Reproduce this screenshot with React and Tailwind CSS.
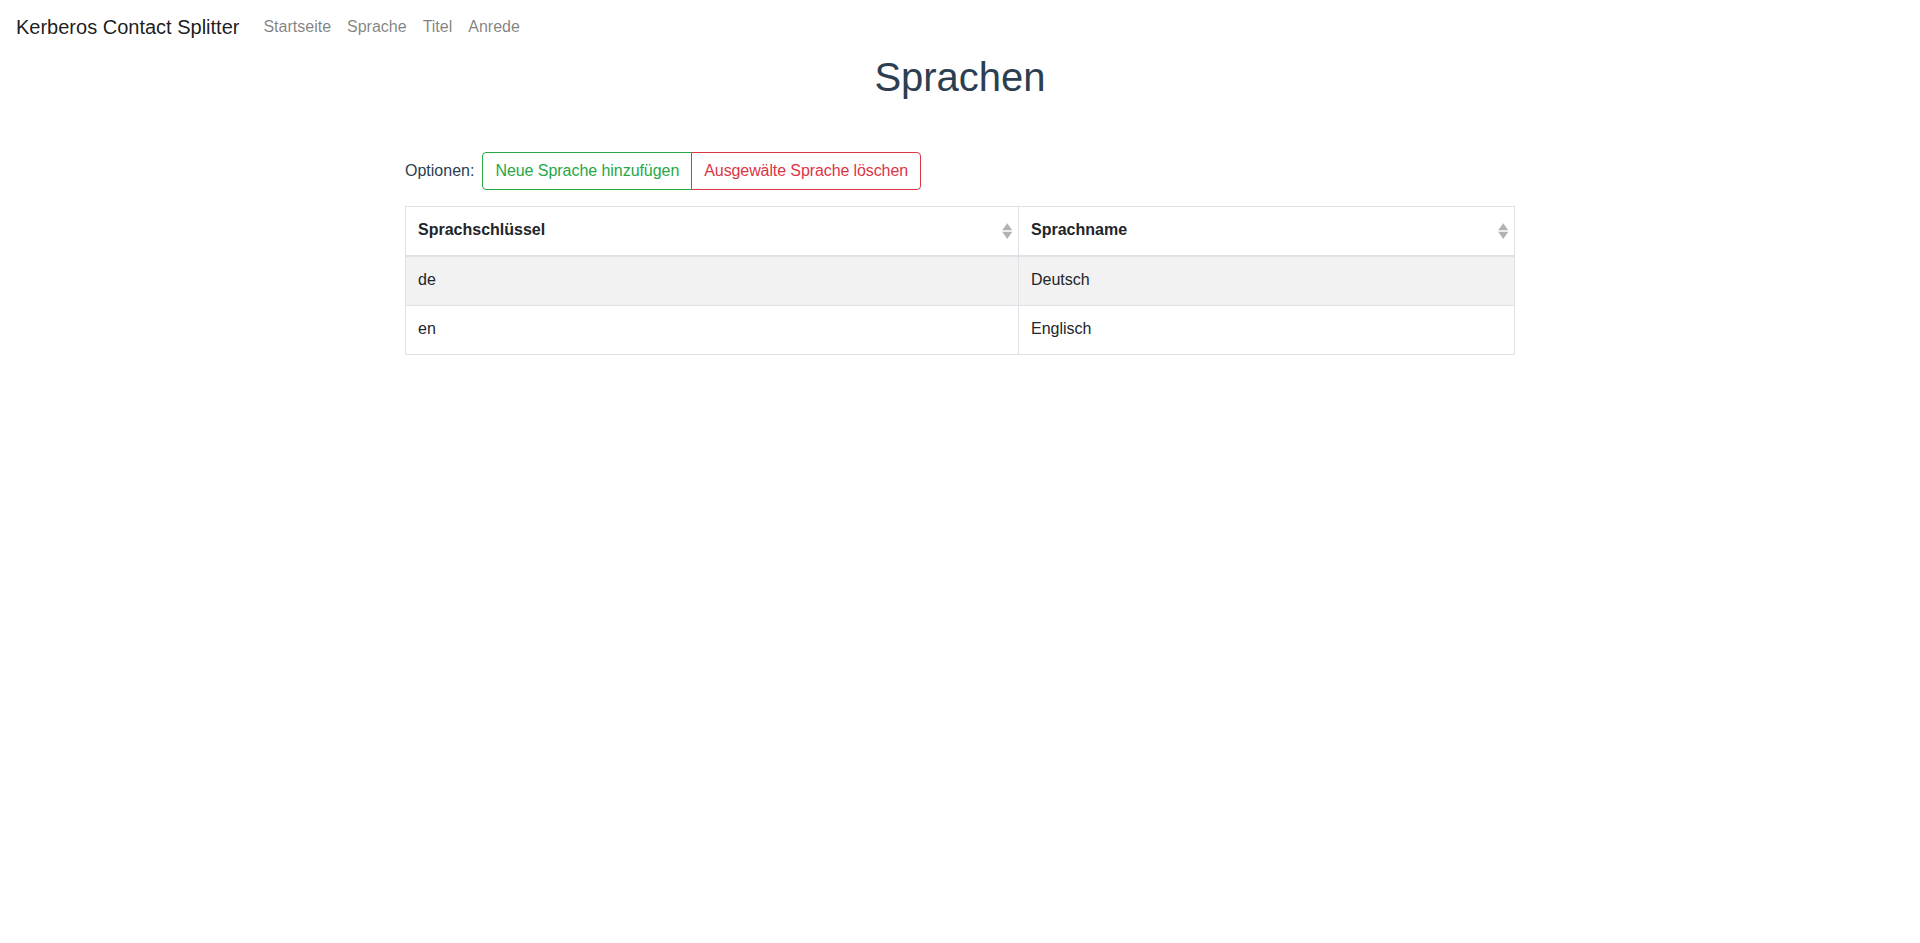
import React from 'react';

const languages = [
    { key: 'de', name: 'Deutsch' },
    { key: 'en', name: 'Englisch' },
];

// bootstrap-vue style "unsorted" indicator
const SortIcon = () => (
    <svg
        className="absolute right-[6px] top-1/2 -translate-y-1/2"
        width="10.4"
        height="16"
        viewBox="0 0 101 101"
        preserveAspectRatio="none"
    >
        <path fill="black" opacity=".3" d="M51 1l25 23 24 22H1l25-22zM51 101l25-23 24-22H1l25 22z" />
    </svg>
);

const Navbar = () => (
    <nav className="flex items-center h-[56px] px-4 pb-[2px]">
        <a className="text-[20px] leading-[30px] text-black/90 mr-4 py-[5px]">Kerberos Contact Splitter</a>
        <ul className="flex">
            {['Startseite', 'Sprache', 'Titel', 'Anrede'].map((item) => (
                <li key={item}>
                    <a className="block px-2 py-2 leading-6 text-black/50">{item}</a>
                </li>
            ))}
        </ul>
    </nav>
);

export default function App() {
    return (
        <div className="min-h-screen bg-white text-[16px] text-[#212529]" style={{ fontFamily: '"Liberation Sans", Arial, sans-serif' }}>
            <Navbar />

            <h1 className="text-center text-[40px] leading-[48px] text-[#2c3e50] -mt-[3px]">Sprachen</h1>

            <div className="w-[1110px] mx-auto mt-[51px]">
                {/* Options */}
                <div className="flex items-center mb-4">
                    <span className="text-[#2c3e50] mr-2 leading-6">Optionen:</span>
                    <div className="inline-flex">
                        <button className="px-3 py-1.5 leading-6 border border-[#28a745] text-[#28a745] rounded-l bg-white tracking-[-0.05px]">
                            Neue Sprache hinzufügen
                        </button>
                        <button className="-ml-px px-3 py-1.5 leading-6 border border-[#dc3545] text-[#dc3545] rounded-r bg-white tracking-[-0.1px]">
                            Ausgewälte Sprache löschen
                        </button>
                    </div>
                </div>

                {/* Table */}
                <table className="w-full border-collapse table-fixed border border-[#dee2e6]">
                    <colgroup>
                        <col className="w-[613px]" />
                        <col />
                    </colgroup>
                    <thead>
                        <tr>
                            <th className="relative text-left font-bold px-3 pt-[11px] pb-[13px] pr-6 leading-6 border border-[#dee2e6] border-b-2">
                                Sprachschlüssel
                                <SortIcon />
                            </th>
                            <th className="relative text-left font-bold px-3 pt-[11px] pb-[13px] pr-6 leading-6 border border-[#dee2e6] border-b-2">
                                Sprachname
                                <SortIcon />
                            </th>
                        </tr>
                    </thead>
                    <tbody>
                        {languages.map((lang, i) => (
                            <tr key={lang.key} className={i % 2 === 0 ? 'bg-[#f2f2f2]' : 'bg-white'}>
                                <td className="px-3 pt-[11px] pb-[13px] leading-6 border border-[#dee2e6]">{lang.key}</td>
                                <td className="px-3 pt-[11px] pb-[13px] leading-6 border border-[#dee2e6]">{lang.name}</td>
                            </tr>
                        ))}
                    </tbody>
                </table>
            </div>
        </div>
    );
}
